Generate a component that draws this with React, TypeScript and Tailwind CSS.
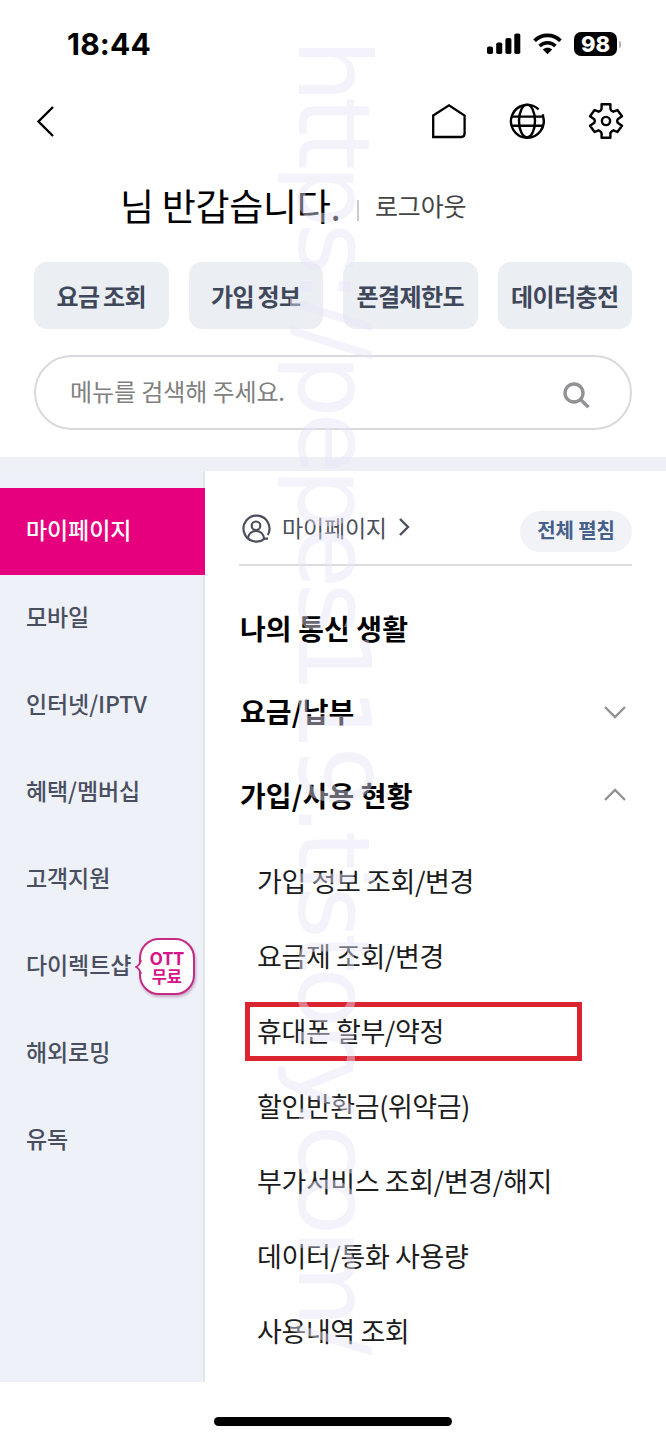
import type { ReactNode } from 'react'

const QUICK_LINKS = ['요금 조회', '가입 정보', '폰결제한도', '데이터충전']

const CATEGORIES = ['마이페이지', '모바일', '인터넷/IPTV', '혜택/멤버십', '고객지원', '다이렉트샵', '해외로밍', '유독']

const SUB_MENU = [
  '가입 정보 조회/변경',
  '요금제 조회/변경',
  '휴대폰 할부/약정',
  '할인반환금(위약금)',
  '부가서비스 조회/변경/해지',
  '데이터/통화 사용량',
  '사용내역 조회'
]

export default function App() {
  return (
    <div className="relative flex h-[1440px] w-[666px] flex-col overflow-hidden bg-white font-['Noto_Sans_CJK_KR',sans-serif] text-black">
      <StatusBar />
      <Toolbar />
      <Greeting />
      <QuickLinks />
      <SearchBox />
      <main className="mt-[27px] flex h-[925px] w-full border-t-[14px] border-[#edf1f6] bg-white">
        <Sidebar />
        <Content />
      </main>
      <div className="mx-auto mt-[35px] h-[9px] w-[238px] rounded-full bg-black" />
      <Watermark />
    </div>
  )
}

function StatusBar() {
  return (
    <div className="flex h-[88px] shrink-0 items-center justify-between pr-[45px] pl-[67px]">
      <span className="mt-px font-['Inter',sans-serif] text-[30px] font-bold tracking-[0.2px]">18:44</span>
      <div className="flex items-center">
        <svg width="34" height="22" viewBox="0 0 34 22">
          <rect x="0" y="13.5" width="6" height="7.5" rx="1.8" />
          <rect x="9.2" y="9.5" width="6" height="11.5" rx="1.8" />
          <rect x="18.4" y="5" width="6" height="16" rx="1.8" />
          <rect x="27.3" y="0.5" width="6" height="20.5" rx="1.8" />
        </svg>
        <svg className="ml-[12px]" width="29" height="22" viewBox="0 0 29 22" fill="none" stroke="#000">
          <path d="M1.6 7.8C8.6 0.6 20.4 0.6 27.4 7.8" strokeWidth="3.8" />
          <path d="M6.6 13C11 8.6 18 8.6 22.4 13" strokeWidth="3.6" />
          <path d="M9.8 16.6c2.6-2.5 6.8-2.5 9.4 0L14.5 21.2z" fill="#000" stroke="none" />
        </svg>
        <div className="ml-[12px] flex h-[24px] w-[43px] items-center justify-center rounded-[7px] bg-black font-['Inter',sans-serif] text-[22px] font-extrabold text-white">
          98
        </div>
        <div className="ml-[2px] h-[7px] w-[2px] rounded-r bg-[#b5b5b5]" />
      </div>
    </div>
  )
}

function Toolbar() {
  return (
    <div className="flex h-[66px] shrink-0 items-center justify-between pr-[41px] pl-[35px]">
      <svg width="20" height="32" viewBox="0 0 20 32" fill="none" stroke="#000" strokeWidth="2.4">
        <path d="M18 2L3.5 16.5 18 31" />
      </svg>
      <div className="flex items-center">
        <svg width="36" height="36" viewBox="0 0 36 36" fill="none" stroke="#000" strokeWidth="2.3">
          <path d="M2.2 12.5L18 2.3l15.6 10.2V30.6q0 3.4-3.4 3.4H2.2z" />
        </svg>
        <svg className="ml-[42px]" width="36" height="36" viewBox="0 0 36 36" fill="none" stroke="#000" strokeWidth="2.4">
          <path d="M29.6 6.4A16.4 16.4 0 1 0 34 13.4V11.2" />
          <ellipse cx="18" cy="18" rx="8" ry="16.4" />
          <path d="M2.5 13.6H34M2.5 22.8H34" />
        </svg>
        <svg
          className="ml-[42px]"
          width="38"
          height="38"
          viewBox="0 0 38 38"
          fill="none"
          stroke="#000"
          strokeWidth="2.4"
          strokeLinejoin="round"
        >
          <path d="M14.6 2.3h8.8v4.1q0 2 3 3.3l4-1.7 4.6 6.2-4.3 3q-1 1.8 0 3.6l4.3 3-4.6 6.2-4-1.7q-3 1.3-3 3.3v4.1h-8.8v-4.1q0-2-3-3.3l-4 1.7L3 23.8l4.3-3q1-1.8 0-3.6l-4.3-3L7.6 8l4 1.7q3-1.3 3-3.3z" />
          <circle cx="19" cy="19" r="4.1" />
        </svg>
      </div>
    </div>
  )
}

function Greeting() {
  return (
    <div className="flex h-[108px] shrink-0 items-center pb-[6px] pl-[120px]">
      <span className="text-[37px] leading-none tracking-[-0.3px]">님 반갑습니다.</span>
      <span className="mt-[10px] ml-[17px] h-[21px] w-[1.5px] bg-[#ccc]" />
      <span className="mt-px ml-[16px] text-[25px] leading-none tracking-[-0.1px] text-[#444]">로그아웃</span>
    </div>
  )
}

function QuickLinks() {
  return (
    <nav className="grid h-[67px] shrink-0 grid-cols-4 gap-[20px] pr-[34px] pl-[34px]">
      {QUICK_LINKS.map((label) => (
        <button
          key={label}
          className="flex items-center justify-center rounded-[13px] bg-[#ebeef2] text-[24px] font-bold tracking-[-0.6px] whitespace-nowrap text-[#3f475a] [word-spacing:-1.5px]"
        >
          {label}
        </button>
      ))}
    </nav>
  )
}

function SearchBox() {
  return (
    <div className="mx-[34px] mt-[26px] flex h-[75px] w-[598px] shrink-0 items-center justify-between rounded-full border-2 border-[#d9d9de] pr-[40px] pl-[34px]">
      <span className="-mt-[4px] text-[24px] leading-none tracking-[-0.1px] text-[#808080]">메뉴를 검색해 주세요.</span>
      <svg className="mt-[4px]" width="28" height="28" viewBox="0 0 28 28" fill="none" stroke="#919196" strokeWidth="3.4">
        <circle cx="12" cy="12" r="9" />
        <path d="M18.5 18.5l8 7.8" />
      </svg>
    </div>
  )
}

function Sidebar() {
  return (
    <aside className="flex w-[205px] shrink-0 flex-col border-r-2 border-[#e1e4eb] bg-[#eef1f8] pt-[17px]">
      {CATEGORIES.map((label, i) => (
        <div
          key={label}
          className={`flex h-[87px] shrink-0 items-center pl-[26px] text-[23px] font-medium tracking-[-0.1px] ${
            i === 0 ? '-mr-[2px] bg-[#e6007e] text-white' : 'text-[#4a4f60]'
          }`}
        >
          <span className="-mt-[4px] whitespace-nowrap">{label}</span>
          {label === '다이렉트샵' ? <OttBadge /> : null}
        </div>
      ))}
    </aside>
  )
}

function OttBadge() {
  return (
    <span className="relative ml-[8px] flex h-[57px] w-[56px] shrink-0 flex-col items-center justify-center rounded-[20px] border-2 border-[#c42b85] bg-white pr-px text-[17.5px] leading-[19px] font-bold tracking-[-0.1px] text-[#d6148a] shadow-[1px_2px_3px_rgba(120,40,100,0.35)]">
      <svg className="absolute top-[20px] -left-[6px]" width="9" height="14" viewBox="0 0 9 14">
        <path d="M8 0v14H6Q5 9 1 7Q5 5 6 0z" fill="#fff" />
        <path d="M6 0Q5 5 1 7Q5 9 6 14" fill="none" stroke="#c42b85" strokeWidth="1.8" />
      </svg>
      <span>OTT</span>
      <span className="text-[16.5px]">무료</span>
    </span>
  )
}

function Content() {
  return (
    <section className="flex flex-1 flex-col pr-[34px] pl-[34px]">
      <div className="flex h-[95px] shrink-0 items-center border-b-2 border-[#dcdcde] pt-[22px]">
        <svg className="ml-[2px]" width="30" height="30" viewBox="0 0 30 30" fill="none" stroke="#4b4f5c" strokeWidth="2.2">
          <path d="M26.8 21A13 13 0 1 0 23.8 24.6H27" />
          <circle cx="15" cy="11.8" r="4.3" />
          <path d="M6.8 25c.6-5 4-8 8.2-8s7.6 3 8.2 8" />
        </svg>
        <span className="-mt-[2px] ml-[11px] text-[23px] leading-none tracking-[-0.2px] text-[#4b4f5c]">마이페이지</span>
        <Chevron className="-mt-[4px] ml-[11px]" d="M2 2l8 8-8 8" width={13} height={20} color="#4b4f5c" />
        <button className="mt-[5px] ml-auto h-[41px] w-[112px] rounded-full bg-[#f2f3f6] pb-[3px] text-[20px] leading-none font-bold tracking-[-0.1px] text-[#46608c]">
          전체 펼침
        </button>
      </div>
      <SectionTitle className="mt-[20px]">나의 통신 생활</SectionTitle>
      <SectionTitle icon={<Chevron className="mt-[2px]" d="M2 2l10 10L22 2" width={24} height={14} color="#929292" />}>
        요금/납부
      </SectionTitle>
      <SectionTitle icon={<Chevron d="M2 12L12 2l10 10" width={24} height={14} color="#929292" />}>가입/사용 현황</SectionTitle>
      <ul className="mt-[6px] pl-[18px]">
        {SUB_MENU.map((label, i) => (
          <li key={label} className="flex h-[75px] items-center">
            {i === 2 ? (
              <span className="mt-[3px] -ml-[12px] flex h-[59px] w-[337px] shrink-0 items-center border-[5px] border-[#da2430] pb-[3px] pl-[7px]">
                <MenuLabel>{label}</MenuLabel>
              </span>
            ) : (
              <MenuLabel>{label}</MenuLabel>
            )}
          </li>
        ))}
      </ul>
    </section>
  )
}

function SectionTitle({ children, icon, className = '' }: { children: ReactNode; icon?: ReactNode; className?: string }) {
  return (
    <h2
      className={`flex h-[83.5px] shrink-0 items-center justify-between pr-[5px] pl-px text-[28px] font-bold tracking-[0.1px] ${className}`}
    >
      {children}
      {icon}
    </h2>
  )
}

function MenuLabel({ children }: { children: ReactNode }) {
  return <span className="text-[27px] leading-none tracking-[-0.4px] whitespace-nowrap text-[#1c1c1c]">{children}</span>
}

function Chevron({
  d,
  width,
  height,
  color,
  className
}: {
  d: string
  width: number
  height: number
  color: string
  className?: string
}) {
  return (
    <svg className={className} width={width} height={height} viewBox={`0 0 ${width} ${height}`} fill="none" stroke={color} strokeWidth="2.4">
      <path d={d} />
    </svg>
  )
}

/** Blog address running down the page, over everything else. */
function Watermark() {
  return (
    <div className="pointer-events-none absolute top-[39px] left-[393px] origin-top-left rotate-90 font-['DejaVu_Sans',sans-serif] text-[100px] leading-[120px] tracking-[-5.4px] whitespace-nowrap text-[#e6e5f8]/45">
      https://pepes119.tistory.com/
    </div>
  )
}
